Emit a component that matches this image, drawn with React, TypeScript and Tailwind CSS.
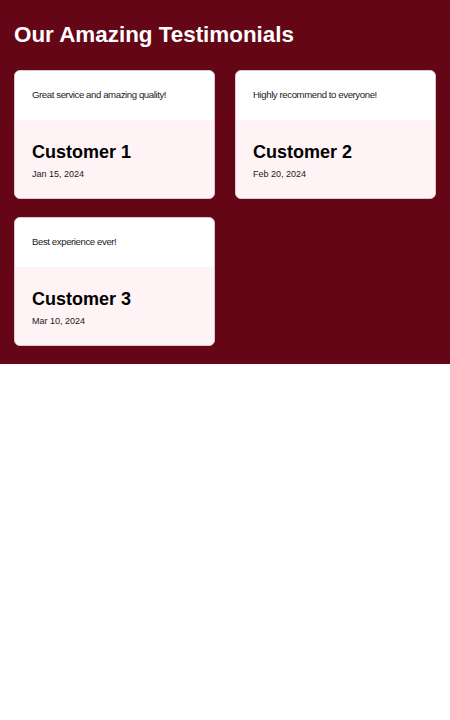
import React from "react";

const items = [
  { quote: "Great service and amazing quality!", name: "Customer 1", date: "Jan 15, 2024" },
  { quote: "Highly recommend to everyone!", name: "Customer 2", date: "Feb 20, 2024" },
  { quote: "Best experience ever!", name: "Customer 3", date: "Mar 10, 2024" },
];

export default function App() {
  return (
    <div className="bg-[#650617] px-3.5 pt-[19px] pb-[18px] font-['Liberation_Sans',sans-serif]">
      <h1 className="text-[22.4px] leading-[32px] font-bold text-white mb-[19px]">Our Amazing Testimonials</h1>
      <div className="grid grid-cols-2 gap-x-5 gap-y-[18px]">
        {items.map((it) => (
          <div key={it.name} className="rounded-md overflow-hidden border border-[#d9c9cc] bg-white flex flex-col h-[129px]">
            <div className="h-[49px] flex items-center px-[17px] bg-white">
              <p className="text-[9.6px] tracking-[-0.4px] text-[#222]">{it.quote}</p>
            </div>
            <div className="flex-1 bg-[#fff3f5] px-[17px] pt-[20px]">
              <h2 className="text-lg font-bold text-black leading-[24px]">{it.name}</h2>
              <p className="text-[9px] font-medium text-[#1a1a1a] mt-[4px]">{it.date}</p>
            </div>
          </div>
        ))}
      </div>
    </div>
  );
}
